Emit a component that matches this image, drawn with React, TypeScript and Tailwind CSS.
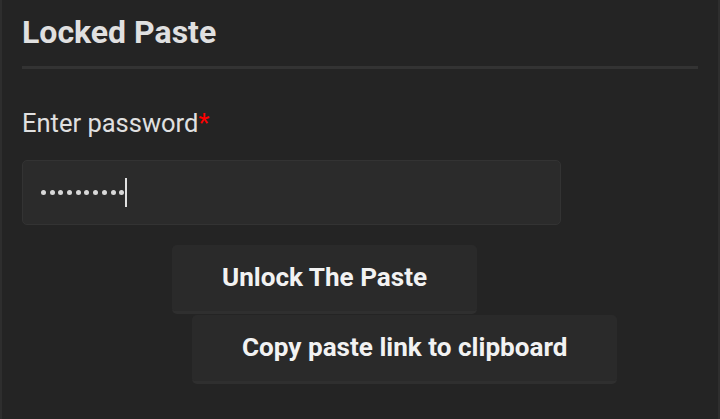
import * as React from 'react';

export default function App() {
  return (
    <div
      className="h-[419px] w-[720px] overflow-hidden border-x-2 border-[#2e2e2e] bg-[#242424] px-5"
      style={{ fontFamily: 'Roboto, "Liberation Sans", sans-serif' }}
    >
      <h1 className="pt-[12px] text-[32px] font-bold leading-[40px] text-[#e0e0e0]">Locked Paste</h1>
      <div className="mt-[14px] h-[3px] bg-[#333333]" />

      <label className="mt-[38px] block text-[25.5px] leading-[32px] text-[#e0e0e0]">
        Enter password<span className="text-[#ff0000]">*</span>
      </label>

      <div className="mt-[21px] flex h-[65px] w-[539px] items-center rounded-[5px] border border-[#333333] bg-[#2b2b2b] pl-[18px]">
        <div className="flex items-center gap-[3.7px]">
          {Array.from({ length: 10 }).map((_, i) => (
            <span key={i} className="h-[5px] w-[5px] rounded-full bg-[#d8d8d8]" />
          ))}
        </div>
        <span className="ml-[1px] h-[29px] w-[2px] bg-[#e0e0e0]" />
      </div>

      <div className="flex flex-col items-start">
        <button className="ml-[150px] mt-[20px] h-[69px] rounded-[5px] border-b-[3px] border-[#2f2f2f] bg-[#2a2a2a] px-[50px] text-[26.1px] font-bold text-[#f2f2f2]">
          Unlock The Paste
        </button>
        <button className="ml-[170px] mt-[1px] h-[69px] rounded-[5px] border-b-[3px] border-[#2f2f2f] bg-[#2a2a2a] px-[50px] text-[26.1px] font-bold text-[#f2f2f2]">
          Copy paste link to clipboard
        </button>
      </div>
    </div>
  );
}
